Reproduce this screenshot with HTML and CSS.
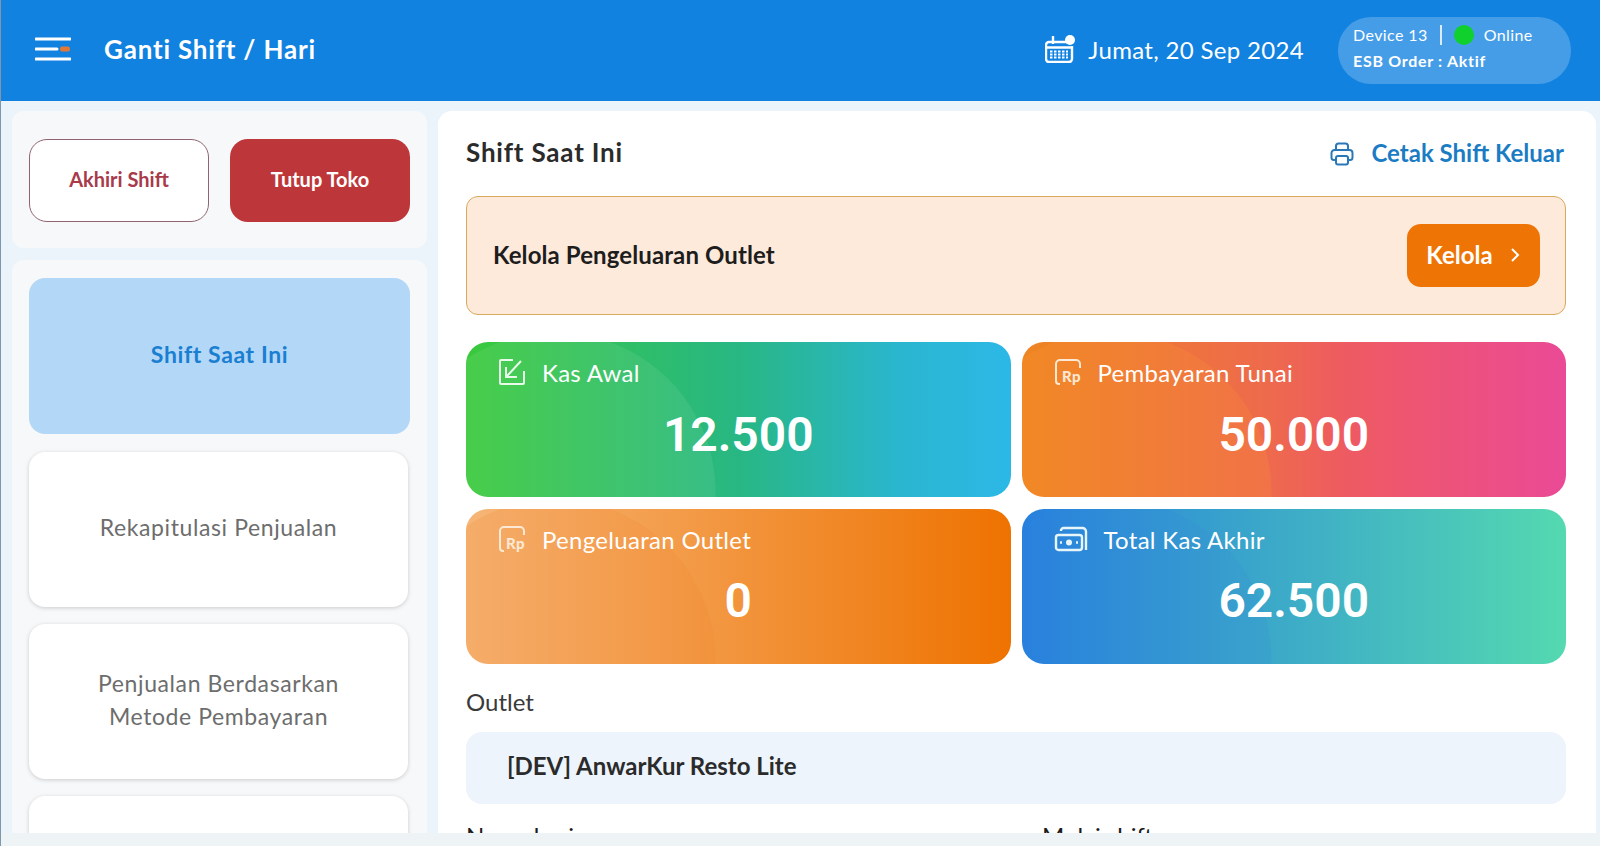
FILE: index.html
```html
<!DOCTYPE html>
<html lang="en">
<head>
    <meta charset="UTF-8">
    <meta name="viewport" content="width=device-width, initial-scale=1.0">
    <title>Ganti Shift / Hari</title>
    <link rel="stylesheet" href="styles.css">
</head>
<body>
    <header class="topbar">
        <svg class="burger" width="36" height="26" viewBox="0 0 36 26">
            <path d="M1 3h34M1 13h21M1 23h34" stroke="#fff" stroke-width="3" stroke-linecap="round" fill="none"/>
            <rect x="25" y="10.500" width="10" height="5" rx="2" fill="#e0783a"/>
        </svg>
        <div class="page-title">Ganti Shift / Hari</div>
        <div class="date">
            <svg width="30" height="28" viewBox="0 0 30 28" fill="none" stroke="#fff" stroke-width="2.400">
                <path d="M22 7H4a3 3 0 0 0-3 3v14a3 3 0 0 0 3 3h20a3 3 0 0 0 3-3V11"/>
                <path d="M1 12.500h26M8 1v8"/>
                <circle cx="25" cy="5" r="5" fill="#fff" stroke="none"/>
                <path d="M5 16.500h18M5 19.500h18M5 22.500h18" stroke-width="2" stroke-dasharray="2.500 1.500"/>
            </svg>
            <span>Jumat, 20 Sep 2024</span>
        </div>
        <div class="device">
            <div class="device-row">
                <span>Device 13</span>
                <span class="sep"></span>
                <span class="dot"></span>
                <span>Online</span>
            </div>
            <div class="device-esb">ESB Order : Aktif</div>
        </div>
    </header>

    <div class="layout">
        <aside class="sidebar">
            <div class="side-card actions">
                <button class="btn-outline">Akhiri Shift</button>
                <button class="btn-red">Tutup Toko</button>
            </div>
            <div class="side-card menu">
                <div class="menu-item active">Shift Saat Ini</div>
                <div class="menu-item">Rekapitulasi Penjualan</div>
                <div class="menu-item">Penjualan Berdasarkan<br>Metode Pembayaran</div>
                <div class="menu-item"></div>
            </div>
        </aside>

        <main class="panel">
            <div class="panel-head">
                <h2>Shift Saat Ini</h2>
                <a class="print">
                    <svg width="24" height="24" viewBox="0 0 24 24" fill="none" stroke="#2a78b8" stroke-width="2">
                        <path d="M6 8V4a2.500 2.500 0 0 1 2.500-2.500h7A2.500 2.500 0 0 1 18 4v4"/>
                        <path d="M6 18H4a2.500 2.500 0 0 1-2.500-2.500V11A3 3 0 0 1 4.500 8h15a3 3 0 0 1 3 3v4.500A2.500 2.500 0 0 1 20 18h-2"/>
                        <rect x="6" y="14" width="12" height="8.500" rx="2"/>
                    </svg>
                    <span>Cetak Shift Keluar</span>
                </a>
            </div>

            <div class="banner">
                <span>Kelola Pengeluaran Outlet</span>
                <button class="btn-orange">Kelola
                    <svg width="12" height="16" viewBox="0 0 12 16" fill="none" stroke="#fff" stroke-width="2"><path d="M3 2l6 6-6 6"/></svg>
                </button>
            </div>

            <div class="stats">
                <div class="stat stat-green">
                    <div class="stat-label">
                        <svg class="stat-icon" width="28" height="28" viewBox="0 0 28 28" fill="none" stroke="#e8fbe8" stroke-width="2">
                            <path d="M15 2H3a1 1 0 0 0-1 1v22a1 1 0 0 0 1 1h22a1 1 0 0 0 1-1V13"/>
                            <path d="M23 3L9 18M8 9v10h11"/>
                        </svg>
                        <span>Kas Awal</span>
                    </div>
                    <div class="stat-value">12.500</div>
                </div>
                <div class="stat stat-red">
                    <div class="stat-label">
                        <svg class="stat-icon" width="28" height="28" viewBox="0 0 28 28" fill="none" stroke="#fde8d4" stroke-width="2">
                            <path d="M6 26H5a3 3 0 0 1-3-3V6a4 4 0 0 1 4-4h16a4 4 0 0 1 4 4v4"/>
                            <text x="8" y="24" class="rp">Rp</text>
                        </svg>
                        <span>Pembayaran Tunai</span>
                    </div>
                    <div class="stat-value">50.000</div>
                </div>
                <div class="stat stat-orange">
                    <div class="stat-label">
                        <svg class="stat-icon" width="28" height="28" viewBox="0 0 28 28" fill="none" stroke="#fde8d4" stroke-width="2">
                            <path d="M6 26H5a3 3 0 0 1-3-3V6a4 4 0 0 1 4-4h16a4 4 0 0 1 4 4v4"/>
                            <text x="8" y="24" class="rp">Rp</text>
                        </svg>
                        <span>Pengeluaran Outlet</span>
                    </div>
                    <div class="stat-value">0</div>
                </div>
                <div class="stat stat-blue">
                    <div class="stat-label wide">
                        <svg class="stat-icon" width="34" height="26" viewBox="0 0 34 26" fill="none" stroke="#e8f6fb" stroke-width="2.400">
                            <rect x="2" y="9" width="26" height="15" rx="2.500"/>
                            <path d="M7 5V4.500A2.500 2.500 0 0 1 9.500 2h19A3.500 3.500 0 0 1 32 5.500V24"/>
                            <circle cx="15" cy="16.500" r="3" fill="#e8f6fb" stroke="none"/>
                            <path d="M6 16.500h2M22 16.500h2"/>
                        </svg>
                        <span>Total Kas Akhir</span>
                    </div>
                    <div class="stat-value">62.500</div>
                </div>
            </div>

            <div class="field-label">Outlet</div>
            <div class="outlet">[DEV] AnwarKur Resto Lite</div>

            <div class="meta">
                <div>Nama kasir</div>
                <div>Mulai shift</div>
            </div>
        </main>
    </div>
    <div class="bottom-band"></div>
</body>
</html>
```

FILE: styles.css
```css
* {
    box-sizing: border-box;
}
html, body {
    height: 100%;
}
body {
    margin: 0;
    display: flex;
    flex-direction: column;
    overflow: hidden;
    font-family: Lato, "Open Sans", sans-serif;
    color: #2b2b2b;
    background-color: #ecf4fb;
    border-left: 1px solid #7f97ad;
}
.topbar {
    height: 101px;
    flex-shrink: 0;
    display: flex;
    align-items: center;
    padding: 0 29px 3px 34px;
    background-color: #1282e0;
    color: white;
}
.page-title {
    margin-left: 33px;
    font-size: 26px;
    font-weight: 700;
    letter-spacing: 0.8px;
}
.date {
    margin-left: auto;
    display: flex;
    align-items: center;
    gap: 13px;
    font-size: 24px;
    letter-spacing: 0.33px;
}
.device {
    margin-left: 34px;
    width: 233px;
    height: 67px;
    margin-bottom: -3px;
    padding: 5px 15px;
    border-radius: 33px;
    background-color: rgba(255,255,255,0.22);
    font-size: 16px;
    line-height: 26px;
    letter-spacing: 0.4px;
}
.device-row {
    display: flex;
    align-items: center;
}
.sep {
    width: 2px;
    height: 20px;
    margin: 0 12px 0 12px;
    background-color: rgba(255,255,255,0.8);
}
.dot {
    width: 20px;
    height: 20px;
    margin-right: 10px;
    border-radius: 50%;
    background-color: #0fd02c;
}
.device-esb {
    font-weight: 700;
    letter-spacing: 0.7px;
}
.layout {
    flex: 1;
    min-height: 0;
    display: flex;
    gap: 11px;
    padding: 10px 4px 0 11px;
}
.bottom-band {
    height: 13px;
    flex-shrink: 0;
    background-color: #eef3f6;
}
.sidebar {
    width: 415px;
    flex-shrink: 0;
    display: flex;
    flex-direction: column;
    gap: 12px;
    min-height: 0;
}
.side-card {
    background-color: #f7f8fa;
    border-radius: 12px;
    padding: 0 17px;
}
.actions {
    height: 137px;
    padding-top: 2px;
    display: grid;
    grid-template-columns: 1fr 1fr;
    align-items: center;
    gap: 21px;
}
.actions button {
    height: 83px;
    padding-bottom: 5px;
    border-radius: 18px;
    font-family: inherit;
    font-size: 20px;
    font-weight: 700;
}
.btn-outline {
    background: white;
    border: 1px solid #8f6470;
    color: #a83a4a;
}
.btn-red {
    background-color: #bd3639;
    border: none;
    color: white;
}
.menu {
    flex: 1;
    min-height: 0;
    overflow: hidden;
    padding-top: 18px;
    border-radius: 12px 12px 0 0;
}
.menu-item {
    height: 155px;
    margin: 0 2px 17px 0;
    padding-bottom: 4px;
    display: flex;
    align-items: center;
    justify-content: center;
    text-align: center;
    border-radius: 16px;
    background: white;
    box-shadow: 0 1px 4px rgba(0,0,0,0.18);
    font-size: 23px;
    line-height: 33px;
    letter-spacing: 0.6px;
    color: #6d6d6d;
}
.menu-item.active {
    height: 156px;
    margin: 0 0 18px;
    background-color: #b3d7f7;
    box-shadow: none;
    color: #1a7fd0;
    font-weight: 700;
}
.panel {
    flex: 1;
    min-width: 0;
    overflow: hidden;
    padding: 0 30px 0 28px;
    background: white;
    border-radius: 14px 14px 0 0;
}
.panel-head {
    height: 85px;
    padding-bottom: 3px;
    display: flex;
    align-items: center;
    justify-content: space-between;
}
.panel-head h2 {
    margin: 0;
    font-size: 26px;
    font-weight: 700;
    letter-spacing: 0.8px;
}
.print {
    display: flex;
    align-items: center;
    gap: 17px;
    margin-right: 2px;
    color: #1b7cc4;
    font-size: 24px;
    font-weight: 700;
}
.print svg {
    margin-top: 3px;
}
.banner {
    height: 119px;
    display: flex;
    align-items: center;
    justify-content: space-between;
    padding: 0 25px 0 26px;
    background-color: #fdeadb;
    border: 1px solid #d9a95c;
    border-radius: 12px;
    font-size: 24px;
    font-weight: 700;
    letter-spacing: 0.1px;
    color: #1d1d1d;
}
.banner > span {
    margin-bottom: 3px;
}
.btn-orange {
    width: 133px;
    height: 63px;
    padding-bottom: 3px;
    display: flex;
    align-items: center;
    justify-content: center;
    gap: 16px;
    border: none;
    border-radius: 14px;
    background-color: #ee7405;
    color: white;
    font-family: inherit;
    font-size: 24px;
    font-weight: 700;
}
.stats {
    display: grid;
    grid-template-columns: 1fr 1fr;
    gap: 12px 11px;
    margin-top: 27px;
}
.stat {
    height: 155px;
    padding: 16px 32px;
    border-radius: 22px;
    color: white;
}
.stat-green {
    background:
        radial-gradient(circle 161px at 89px 151px, rgba(255,255,255,0.07) 99.5%, transparent 100%),
        linear-gradient(90deg, #3ac93c, #28b783 50%, #2ab6d0 80%, #2cb8e6);
}
.stat-red {
    background:
        radial-gradient(circle 161px at 89px 151px, rgba(255,150,50,0.2) 99.5%, transparent 100%),
        linear-gradient(90deg, #ee8522, #ee6a4c 45%, #ee5a62 60%, #ea4a96);
}
.stat-orange {
    background:
        radial-gradient(circle 161px at 89px 151px, rgba(240,130,40,0.18) 99.5%, transparent 100%),
        linear-gradient(90deg, #f6b678, #ee7200);
}
.stat-blue {
    background:
        radial-gradient(circle 161px at 89px 151px, rgba(50,130,215,0.15) 99.5%, transparent 100%),
        linear-gradient(90deg, #2780de, #54d9b0);
}
.stat-label {
    display: flex;
    align-items: center;
    gap: 16px;
    height: 28px;
    font-size: 24px;
    letter-spacing: 0.3px;
}
.stat-icon {
    flex-shrink: 0;
}
.rp {
    font-family: Lato, sans-serif;
    font-size: 15px;
    font-weight: 900;
    fill: currentColor;
    stroke: none;
    color: #fde8d4;
}
.stat-value {
    margin-top: 19px;
    text-align: center;
    font-family: Roboto, sans-serif;
    font-size: 48px;
    font-weight: 600;
    line-height: 60px;
}
.stat-orange .stat-value,
.stat-blue .stat-value {
    margin-top: 18px;
}
.field-label {
    margin-top: 23px;
    font-size: 24px;
    line-height: 30px;
    color: #3a3a3a;
}
.outlet {
    height: 72px;
    margin-top: 15px;
    padding: 0 41px 5px;
    display: flex;
    align-items: center;
    background-color: #edf4fb;
    border-radius: 16px;
    font-size: 24px;
    font-weight: 700;
}
.meta {
    display: grid;
    grid-template-columns: 576px 1fr;
    margin-top: 17px;
    font-size: 24px;
    line-height: 30px;
    color: #1a1a1a;
}
```
